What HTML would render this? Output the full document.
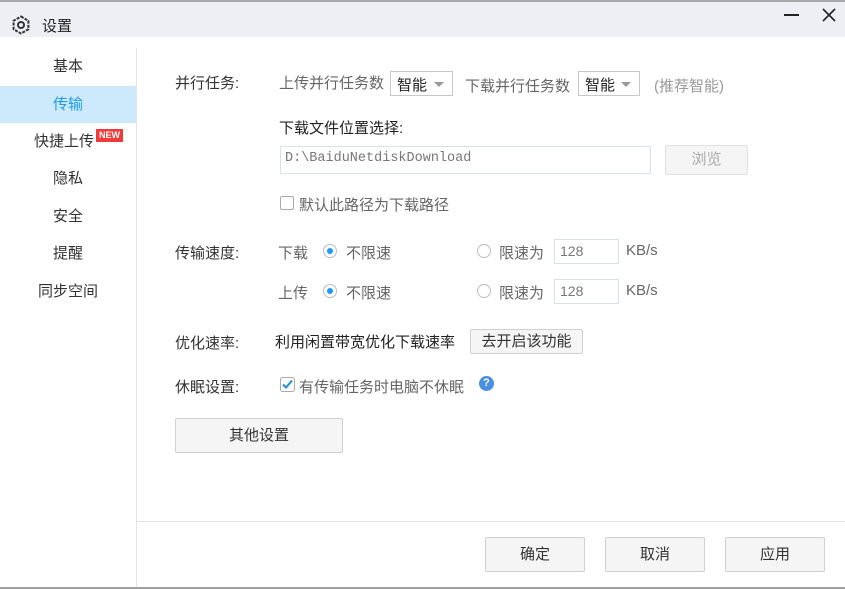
<!DOCTYPE html>
<html><head><meta charset="utf-8"><style>
*{margin:0;padding:0;box-sizing:border-box}
body{width:845px;height:589px;position:relative;background:#fff;font-family:"Liberation Sans","Noto Sans CJK SC",sans-serif;font-size:15px;color:#333;overflow:hidden}
.a{position:absolute;white-space:nowrap}
.g{color:#666}
.btn{position:absolute;background:#f5f5f5;border:1px solid #d0d0d0;border-radius:2px;text-align:center;color:#333}
.sel{position:absolute;border:1px solid #c8c8c8;background:#fff;height:25px;padding:2px 0 0 6px;color:#222}
.sel:after{content:"";position:absolute;right:8px;top:10px;border-left:5px solid transparent;border-right:5px solid transparent;border-top:5px solid #999}
.inp{position:absolute;border:1px solid #d8e0e8;background:#fff;color:#777}
.rad{position:absolute;width:14px;height:14px;border:1px solid #b8bec8;border-radius:50%;background:#fff}
.rad.on:after{content:"";position:absolute;left:3px;top:3px;width:6px;height:6px;border-radius:50%;background:#1e9bf0}
.nav{position:absolute;left:0;width:136px;text-align:center;height:36px;line-height:36px}
</style></head><body>
<div class="a" style="left:0;top:0;width:845px;height:2px;background:#a8a8a8"></div>
<div class="a" style="left:0;top:2px;width:845px;height:35px;background:#edeff4"></div>
<svg class="a" style="left:11px;top:15px" width="20" height="20" viewBox="0 0 20 20"><path d="M10 1.5l7.4 4.25v8.5L10 18.5l-7.4-4.25v-8.5z" fill="none" stroke="#333" stroke-width="2" stroke-dasharray="3 1.2"/><circle cx="10" cy="10" r="3" fill="none" stroke="#333" stroke-width="2"/></svg>
<div class="a" style="left:42px;top:15px;color:#222">设置</div>
<div class="a" style="left:784px;top:14px;width:15px;height:2px;background:#222"></div>
<svg class="a" style="left:822px;top:8px" width="14" height="14" viewBox="0 0 14 14"><path d="M1 1L13 13M13 1L1 13" stroke="#222" stroke-width="1.6"/></svg>

<div class="a" style="left:136px;top:48px;width:1px;height:540px;background:#e4e4e4"></div>
<div class="nav" style="top:49px">基本</div>
<div class="nav" style="top:86px;background:#cdeafd;color:#1e9bf0;height:37px;line-height:37px">传输</div>
<div class="nav" style="top:124px;padding-right:8px">快捷上传</div>
<div class="a" style="left:96px;top:129px;background:#f03b3b;color:#fff;font-size:9px;font-weight:bold;padding:1px 3px;line-height:11px">NEW</div>
<div class="nav" style="top:161px">隐私</div>
<div class="nav" style="top:199px">安全</div>
<div class="nav" style="top:236px">提醒</div>
<div class="nav" style="top:274px">同步空间</div>

<div class="a" style="left:175px;top:72px">并行任务:</div>
<div class="a g" style="left:279px;top:72px">上传并行任务数</div>
<div class="sel" style="left:390px;top:71px;width:63px">智能</div>
<div class="a g" style="left:465px;top:75px">下载并行任务数</div>
<div class="sel" style="left:578px;top:71px;width:62px">智能</div>
<div class="a" style="left:654px;top:75px;color:#999">(推荐智能)</div>

<div class="a" style="left:279px;top:117px;color:#222">下载文件位置选择:</div>
<div class="inp" style="left:280px;top:146px;width:371px;height:28px;padding:4px 0 0 4px;font-family:'Liberation Mono',monospace;font-size:13.5px">D:\BaiduNetdiskDownload</div>
<div class="btn" style="left:665px;top:145px;width:83px;height:30px;line-height:28px;color:#aaa;background:#f5f5f5;border-color:#e0e0e0">浏览</div>
<div class="a" style="left:280px;top:196px;width:14px;height:14px;border:1px solid #aaa;border-radius:2px"></div>
<div class="a g" style="left:299px;top:194px">默认此路径为下载路径</div>

<div class="a" style="left:175px;top:242px">传输速度:</div>
<div class="a g" style="left:278px;top:242px">下载</div>
<div class="rad on" style="left:323px;top:244px"></div>
<div class="a g" style="left:346px;top:242px">不限速</div>
<div class="rad" style="left:477px;top:244px"></div>
<div class="a g" style="left:499px;top:242px">限速为</div>
<div class="inp" style="left:554px;top:239px;width:65px;height:25px;padding:3px 0 0 5px;font-size:14px">128</div>
<div class="a g" style="left:626px;top:242px">KB/s</div>

<div class="a g" style="left:278px;top:282px">上传</div>
<div class="rad on" style="left:323px;top:284px"></div>
<div class="a g" style="left:346px;top:282px">不限速</div>
<div class="rad" style="left:477px;top:284px"></div>
<div class="a g" style="left:499px;top:282px">限速为</div>
<div class="inp" style="left:554px;top:279px;width:65px;height:25px;padding:3px 0 0 5px;font-size:14px">128</div>
<div class="a g" style="left:626px;top:282px">KB/s</div>

<div class="a" style="left:175px;top:332px">优化速率:</div>
<div class="a" style="left:275px;top:331px;color:#222">利用闲置带宽优化下载速率</div>
<div class="btn" style="left:470px;top:329px;width:113px;height:25px;line-height:23px">去开启该功能</div>

<div class="a" style="left:175px;top:376px">休眠设置:</div>
<svg class="a" style="left:280px;top:377px" width="15" height="15" viewBox="0 0 15 15"><rect x="0.5" y="0.5" width="14" height="14" rx="2" fill="#fff" stroke="#aaa"/><path d="M3 7.5l3 3 6-7" fill="none" stroke="#1e8ee0" stroke-width="2"/></svg>
<div class="a g" style="left:299px;top:376px">有传输任务时电脑不休眠</div>
<div class="a" style="left:479px;top:376px;width:15px;height:15px;border-radius:50%;background:#4a90e2;color:#fff;font-size:11px;font-weight:bold;text-align:center;line-height:15px">?</div>

<div class="btn" style="left:175px;top:418px;width:168px;height:35px;line-height:33px">其他设置</div>

<div class="a" style="left:137px;top:521px;width:708px;height:1px;background:#e4e4e4"></div>
<div class="btn" style="left:485px;top:537px;width:100px;height:35px;line-height:33px">确定</div>
<div class="btn" style="left:605px;top:537px;width:100px;height:35px;line-height:33px">取消</div>
<div class="btn" style="left:725px;top:537px;width:100px;height:35px;line-height:33px">应用</div>
<div class="a" style="left:0;top:587px;width:845px;height:2px;background:#a0a0a0"></div>
</body></html>
